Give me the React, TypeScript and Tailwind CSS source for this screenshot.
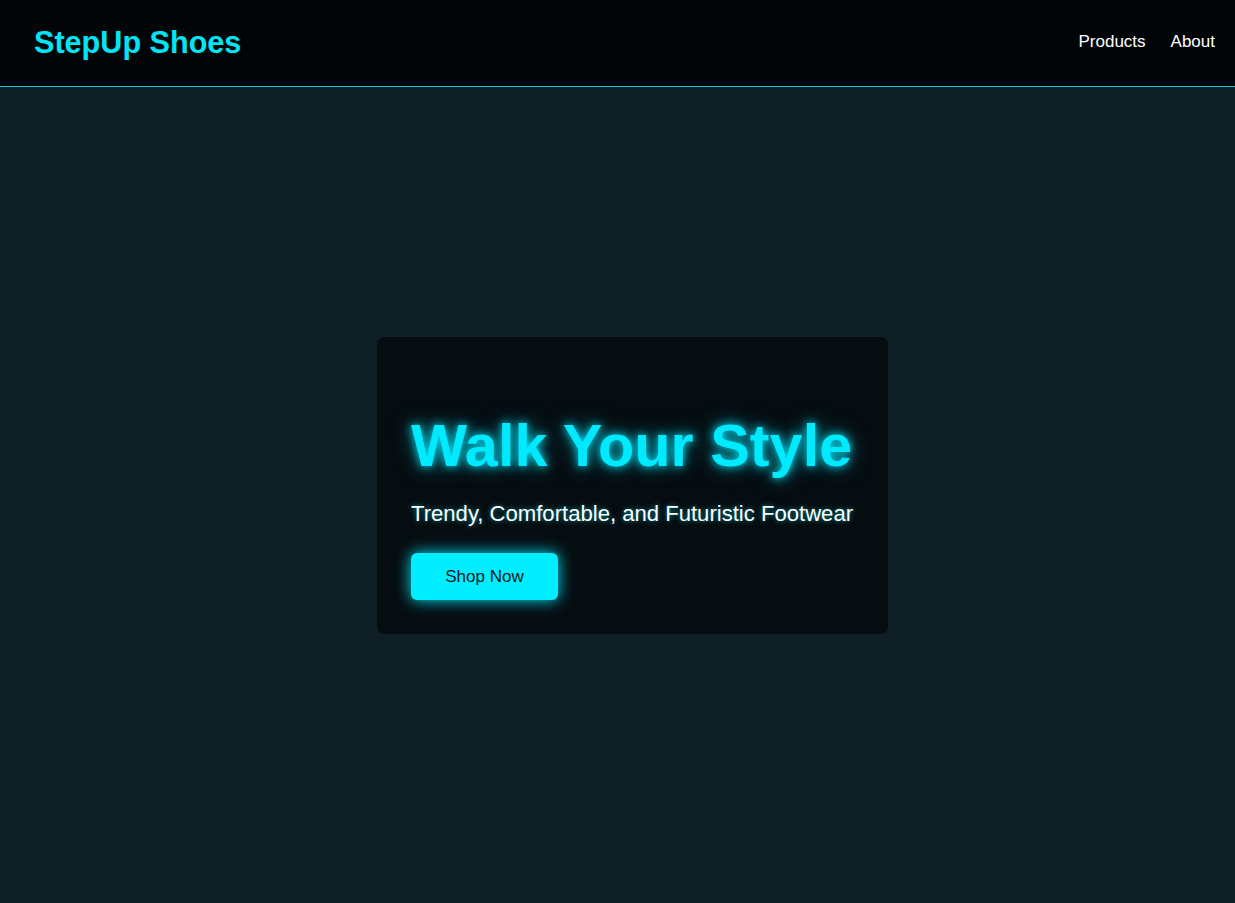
import React from "react";

export default function App() {
  return (
    <div className="min-h-screen flex flex-col bg-[#0f1f26] font-['Liberation_Sans',Arial,sans-serif]">
      <header className="h-[87px] shrink-0 flex items-center justify-between bg-[#020507] border-b border-[#1cc3d6] pl-[34px] pr-[20px]">
        <div className="text-[30.6px] font-bold text-[#00e6f6] leading-none -mt-[2px]">StepUp Shoes</div>
        <nav className="flex gap-[25px] text-[17px] text-white leading-none -mt-[3px]">
          <a href="#">Products</a>
          <a href="#">About</a>
        </nav>
      </header>
      <main className="flex-1 flex justify-center items-start pt-[250px] pl-[30px]">
        <div className="w-[511px] bg-[#060d11] rounded-[8px] pl-[34px] pr-[10px] pt-[79px] pb-[34px]">
          <h1 className="text-[59.4px] font-bold leading-[59px] text-[#00eaff] whitespace-nowrap [text-shadow:0_0_10px_#00eaff,0_0_20px_rgba(0,234,255,0.5)]">
            Walk Your Style
          </h1>
          <p className="mt-[26px] text-[22.1px] leading-[26px] text-white whitespace-nowrap [text-shadow:0_0_5px_rgba(0,234,255,0.6)]">
            Trendy, Comfortable, and Futuristic Footwear
          </p>
          <button className="mt-[26px] w-[147px] h-[47px] rounded-[6px] bg-[#00eeff] text-[17px] text-[#0a1a20] shadow-[0_0_15px_#00eaff]">
            Shop Now
          </button>
        </div>
      </main>
    </div>
  );
}
